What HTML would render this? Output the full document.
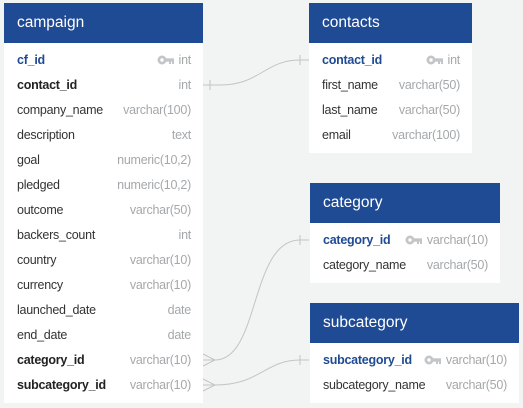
<!DOCTYPE html>
<html><head><style>
body{margin:0;width:523px;height:408px;background:#f2f3f3;font-family:"Liberation Sans",Arial,sans-serif;position:relative;overflow:hidden}
.t{position:absolute;background:#fff}
.h{background:#1f4a94;color:#fff;font-size:15.5px;height:40px;line-height:40px;padding-left:13px}
.r{position:relative;height:25px;line-height:25px;font-size:12.5px;letter-spacing:-0.25px;color:#333;padding-left:13px}
.r .ty{position:absolute;right:12px;top:0;color:#a5a8ab;font-weight:normal}
.pk{color:#1f4a94;font-weight:bold}
.b{font-weight:bold;color:#222}
.k{display:inline-block;vertical-align:middle;margin-right:5px;margin-top:-2px}
svg.l{position:absolute;left:0;top:0}
</style></head><body>
<svg class="l" width="523" height="408" fill="none" stroke="#c2c4c6" stroke-width="1">
<path d="M203 85 H220 C260 85 265 60 300 60 H309"/>
<path d="M210 80 V90 M300 55 V65"/>
<path d="M203 360 H215 C260 360 250 240 300 240 H309"/>
<path d="M300 235 V245 M203 354 L215 360 L203 366"/>
<path d="M203 385 H215 C260 385 265 360 300 360 H309"/>
<path d="M300 355 V365 M203 379 L215 385 L203 391"/>
</svg>
<svg width="0" height="0" style="position:absolute"><defs><g id="key"><circle cx="5" cy="5" r="4.5" fill="#c3c6c9"/><circle cx="5" cy="5" r="1.7" fill="#fff"/><rect x="8" y="3.3" width="9" height="3.4" fill="#c3c6c9"/><rect x="12" y="5" width="2" height="4" fill="#c3c6c9"/><rect x="15" y="5" width="2" height="4" fill="#c3c6c9"/></g></defs></svg>
<div class="t" style="left:4px;top:3px;width:199px;height:400px">
<div class="h">campaign</div><div style="height:5px"></div>
<div class="r pk">cf_id<span class="ty"><svg class="k" width="17" height="10"><use href="#key"/></svg>int</span></div>
<div class="r b">contact_id<span class="ty">int</span></div>
<div class="r">company_name<span class="ty">varchar(100)</span></div>
<div class="r">description<span class="ty">text</span></div>
<div class="r">goal<span class="ty">numeric(10,2)</span></div>
<div class="r">pledged<span class="ty">numeric(10,2)</span></div>
<div class="r">outcome<span class="ty">varchar(50)</span></div>
<div class="r">backers_count<span class="ty">int</span></div>
<div class="r">country<span class="ty">varchar(10)</span></div>
<div class="r">currency<span class="ty">varchar(10)</span></div>
<div class="r">launched_date<span class="ty">date</span></div>
<div class="r">end_date<span class="ty">date</span></div>
<div class="r b">category_id<span class="ty">varchar(10)</span></div>
<div class="r b">subcategory_id<span class="ty">varchar(10)</span></div>
</div>
<div class="t" style="left:309px;top:3px;width:163px;height:150px">
<div class="h">contacts</div><div style="height:5px"></div>
<div class="r pk">contact_id<span class="ty"><svg class="k" width="17" height="10"><use href="#key"/></svg>int</span></div>
<div class="r">first_name<span class="ty">varchar(50)</span></div>
<div class="r">last_name<span class="ty">varchar(50)</span></div>
<div class="r">email<span class="ty">varchar(100)</span></div>
</div>
<div class="t" style="left:310px;top:183px;width:190px;height:100px">
<div class="h">category</div><div style="height:5px"></div>
<div class="r pk">category_id<span class="ty"><svg class="k" width="17" height="10"><use href="#key"/></svg>varchar(10)</span></div>
<div class="r">category_name<span class="ty">varchar(50)</span></div>
</div>
<div class="t" style="left:310px;top:303px;width:209px;height:100px">
<div class="h">subcategory</div><div style="height:5px"></div>
<div class="r pk">subcategory_id<span class="ty"><svg class="k" width="17" height="10"><use href="#key"/></svg>varchar(10)</span></div>
<div class="r">subcategory_name<span class="ty">varchar(50)</span></div>
</div>
</body></html>
